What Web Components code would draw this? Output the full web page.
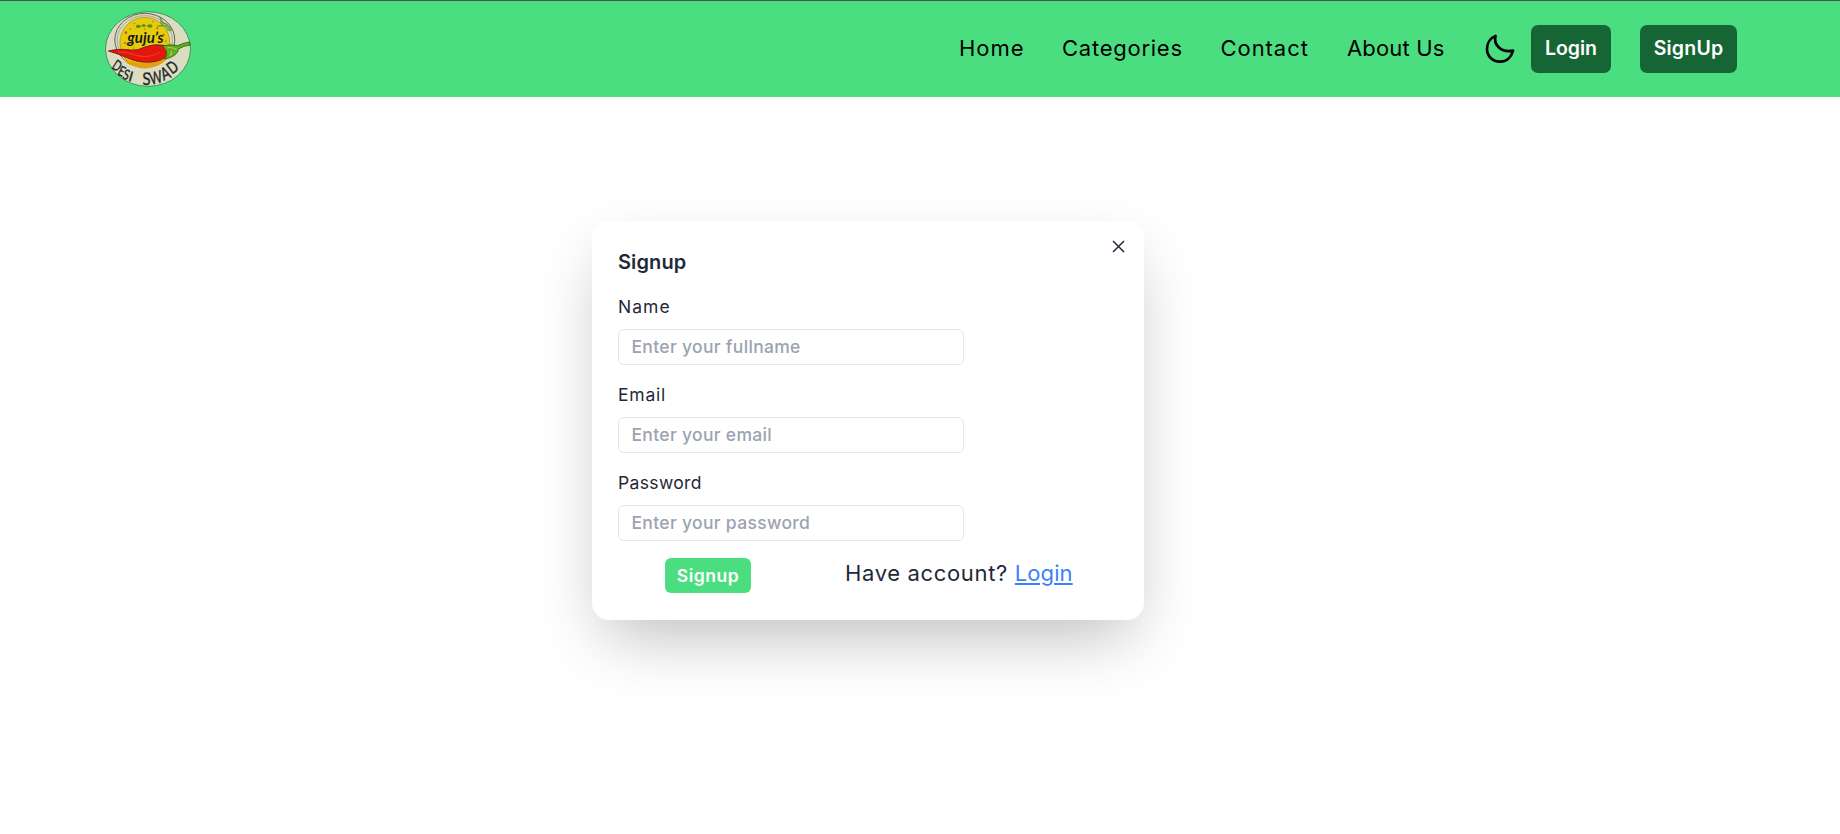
<!DOCTYPE html>
<html lang="en">
<head>
<meta charset="utf-8">
<title>Guju's Desi Swad</title>
<style>
body{margin:0;background:#fff;font-family:Inter,"Liberation Sans",sans-serif;color:#1f2937}
</style>
</head>
<body>
<app-page></app-page>
<script>
const define=(name,html)=>customElements.define(name,class extends HTMLElement{
  connectedCallback(){
    if(this.shadowRoot)return;
    const t=document.createElement('template');
    t.innerHTML=typeof html==='function'?html(this):html;
    this.attachShadow({mode:'open'}).append(t.content.cloneNode(true));
  }
});

define('brand-logo',`<style>:host{display:block;width:86px;height:76px}svg{display:block;overflow:visible}</style>
<svg width="86" height="76" viewBox="32 34 255 228" preserveAspectRatio="none">
  <ellipse cx="159.500" cy="148" rx="126" ry="112" fill="#dcdcc0" stroke="#2f8a4b" stroke-width="2.500"/>
  <ellipse cx="150" cy="121" rx="89" ry="80" fill="none" stroke="#4a4a42" stroke-width="2.500"/>
  <ellipse cx="150" cy="122" rx="82" ry="74" fill="none" stroke="#77766a" stroke-width="1.500"/>
  <ellipse cx="150" cy="129" rx="74" ry="76" fill="#e2cc0c" stroke="#a58c10" stroke-width="2"/>
  <path d="M84 176Q150 206 216 172Q205 202 150 205Q98 202 84 176Z" fill="#e3a00e"/>
  <g fill="#d9541a"><circle cx="94" cy="99" r="4"/><circle cx="107" cy="88" r="2.500"/><circle cx="120" cy="71" r="2"/><circle cx="187" cy="86" r="3"/><circle cx="206" cy="105" r="3"/><circle cx="91" cy="130" r="3"/><circle cx="212" cy="125" r="2.500"/><circle cx="150" cy="88" r="2"/><circle cx="174" cy="66" r="2"/><circle cx="117" cy="145" r="2"/></g>
  <g fill="#5c8a1c"><ellipse cx="131" cy="80" rx="8" ry="5"/><ellipse cx="147" cy="78" rx="6" ry="4"/><ellipse cx="165" cy="79" rx="8" ry="5"/></g>
  <g fill="none" stroke="#55801e" stroke-width="3"><path d="M194 54Q205 62 201 80"/><path d="M204 70Q217 70 229 93"/><path d="M203 78L187 79"/></g>
  <g fill="#7da843"><ellipse cx="211" cy="79" rx="9" ry="4" transform="rotate(25 211 79)"/><ellipse cx="221" cy="90" rx="8" ry="4" transform="rotate(20 221 90)"/><ellipse cx="198" cy="66" rx="3" ry="8"/></g>
  <text x="98" y="130" font-family="Lato,sans-serif" font-size="48" font-weight="700" font-style="italic" fill="#191919" textLength="108" lengthAdjust="spacingAndGlyphs">guju’s</text>
  <path d="M42 154Q70 146 108 151Q129 154 150 142Q178 131 207 137L224 155Q214 180 178 186Q137 193 97 174Q65 160 42 154Z" fill="#e5160e" stroke="#681811" stroke-width="2.500"/>
  <path d="M70 157Q100 157 122 166Q158 178 195 158" fill="none" stroke="#f0401f" stroke-width="3"/>
  <path d="M203 139Q226 132 247 138Q263 130 282 127L285 136Q265 138 250 148Q248 169 209 179Q218 163 213 153Q209 146 203 139Z" fill="#65ad20" stroke="#2c5d14" stroke-width="2.500"/>
  <path d="M218 144Q237 143 244 150M226 155Q234 159 224 168" fill="none" stroke="#b8e05a" stroke-width="3"/>
  <g font-family="Lato,sans-serif" fill="#20232d" stroke="#20232d" stroke-width="1" text-anchor="middle">
    <text font-size="44" transform="translate(60 211) rotate(32) scale(.7 1)">D</text>
    <text font-size="42" transform="translate(75 228) rotate(26) scale(.75 1)">E</text>
    <text font-size="42" transform="translate(90 239) rotate(20) scale(.8 1)">S</text>
    <text font-size="42" transform="translate(105 245) rotate(15)">I</text>
    <text font-size="52" transform="translate(155 256) rotate(-1) scale(.85 1)">S</text>
    <text font-size="52" transform="translate(187 252) rotate(-13) scale(.7 1)">W</text>
    <text font-size="52" transform="translate(218 238) rotate(-24) scale(.75 1)">A</text>
    <text font-size="50" transform="translate(242 217) rotate(-36) scale(.75 1)">D</text>
  </g>
</svg>`);

define('nav-link',`<style>:host{display:block;font-size:22px;line-height:32px;color:#000;white-space:nowrap}</style><slot></slot>`);

define('auth-button',`<style>
:host{display:block}
button{display:block;box-sizing:border-box;width:100%;height:48px;padding:0 0 1px;border:0;border-radius:7px;background:#166534;color:#fff;font:600 19.5px/47px Inter,sans-serif;letter-spacing:inherit}
</style><button><slot></slot></button>`);

define('theme-toggle',`<style>:host{display:block;width:30px;height:30px}svg{display:block}</style>
<svg width="30" height="30" viewBox="0 0 30 30"><path d="M10.500 2C8.300 10.500 16 19.200 28 16.600C26.300 23.500 21.300 27.700 15 27.700C7.500 27.700 2 22.200 2 15C2 8.900 5.400 3.900 10.500 2Z" fill="none" stroke="#000" stroke-width="2.700" stroke-linejoin="round"/></svg>`);

define('site-header',`<style>
:host{display:flex;align-items:center;box-sizing:border-box;height:97px;border-top:1px solid #4b5550;background:#4ade80;padding:0 103px 0 105px}
nav{display:flex;margin-left:auto;margin-top:-3px;gap:38px}
.l1{width:65px;letter-spacing:.95px}.l2{width:120.500px;letter-spacing:.75px}.l3{width:88.500px;letter-spacing:.95px}.l4{width:98px;letter-spacing:.15px}
theme-toggle{margin:0 16px 0 40px}
.a{width:80px}.b{width:97px;margin-left:29px;letter-spacing:.2px}
</style>
<brand-logo></brand-logo>
<nav><nav-link class="l1">Home</nav-link><nav-link class="l2">Categories</nav-link><nav-link class="l3">Contact</nav-link><nav-link class="l4">About Us</nav-link></nav>
<theme-toggle></theme-toggle>
<auth-button class="a">Login</auth-button><auth-button class="b">SignUp</auth-button>`);

define('form-field',el=>`<style>
:host{display:block;font-size:17.5px}
label{display:block;line-height:28px;margin-bottom:8px;letter-spacing:${el.getAttribute('label-spacing')}}
input{display:block;box-sizing:border-box;width:345.500px;height:36px;padding:0 12.500px 1px;border:1px solid #e5e7eb;border-radius:6px;background:#fff;outline:0;font:500 17.5px Inter,sans-serif;letter-spacing:.32px;color:#1f2937}
input::placeholder{color:#9ca3af;opacity:1}
</style><label for="f">${el.getAttribute('label')}</label><input id="f" type="${el.getAttribute('type')}" placeholder="${el.getAttribute('hint')}">`);

define('signup-card',`<style>
:host{display:block;position:relative;box-sizing:border-box;width:552px;height:399px;padding:26px;border-radius:17px;background:#fff;box-shadow:0 27px 66px -13px rgba(0,0,0,.27)}
h3{margin:0 0 16px;font-size:20px;line-height:30px;font-weight:600;letter-spacing:.1px}
form-field+form-field{margin-top:16px}
.close{position:absolute;top:8px;right:8px;display:grid;place-items:center;width:35px;height:35px;padding:0;border:0;background:none;color:#1f2937}
footer{display:flex;align-items:center;margin-top:17px;padding-left:47px}
.go{width:86px;height:35px;padding:0;border:0;border-radius:6px;background:#4ade80;color:#fff;font:600 17.5px/34px Inter,sans-serif;letter-spacing:.5px}
p{margin:-5px 0 0 94px;font-size:22px;line-height:32px;letter-spacing:.65px;white-space:nowrap}
a{color:#3b82f6;text-decoration:underline;text-decoration-thickness:2px;text-underline-offset:2px;letter-spacing:.1px}
</style>
<button class="close" aria-label="Close"><svg width="13" height="13" viewBox="0 0 13 13"><path d="M1 1L12 12M12 1L1 12" stroke="currentColor" stroke-width="1.500"/></svg></button>
<h3>Signup</h3>
<form-field label="Name" label-spacing="1.05px" type="text" hint="Enter your fullname"></form-field>
<form-field label="Email" label-spacing=".8px" type="email" hint="Enter your email"></form-field>
<form-field label="Password" label-spacing=".35px" type="password" hint="Enter your password"></form-field>
<footer><button class="go">Signup</button><p>Have account? <a>Login</a></p></footer>`);

define('app-page',`<style>:host{display:block;height:834px;overflow:hidden}main{display:flex;padding:124px 0 0 592px}</style>
<site-header></site-header><main><signup-card></signup-card></main>`);
</script>
</body>
</html>
